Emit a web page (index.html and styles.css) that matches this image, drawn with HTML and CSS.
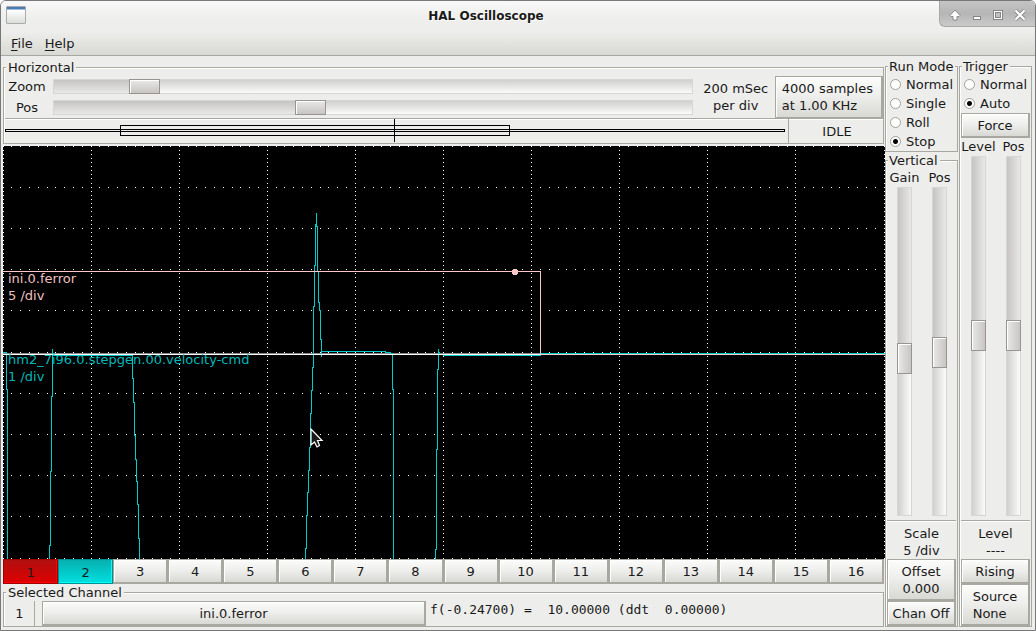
FILE: index.html
```html
<!DOCTYPE html>
<html lang="en">
<head>
<meta charset="utf-8">
<title>HAL Oscilloscope</title>
<link rel="stylesheet" href="styles.css">
</head>
<body>
<div class="window">
  <header class="titlebar">
    <span class="app-icon"></span>
    <h1 class="title">HAL Oscilloscope</h1>
    <div class="win-controls">
      <button class="win-btn" aria-label="Shade"><svg width="12" height="12" viewBox="0 0 12 12"><path d="M6 1L11 6.500L10 7.500H8V11H4V7.500H2L1 6.500Z" fill="#fff" stroke="#8a8a8a"/></svg></button>
      <button class="win-btn" aria-label="Minimize"><svg width="12" height="12" viewBox="0 0 12 12"><rect x="2.500" y="7.500" width="7" height="3" fill="#fff" stroke="#858585"/></svg></button>
      <button class="win-btn" aria-label="Maximize"><svg width="12" height="12" viewBox="0 0 12 12"><rect x="1.500" y="1.500" width="9" height="9" fill="#fff" stroke="#858585"/><rect x="3.500" y="3.500" width="5" height="5" fill="#c0c0c0" stroke="#858585"/></svg></button>
      <button class="win-btn" aria-label="Close"><svg width="12" height="12" viewBox="0 0 12 12"><path d="M1.500 1.500L10.500 10.500M10.500 1.500L1.500 10.500" stroke="#8a8a8a" stroke-width="4"/><path d="M1.500 1.500L10.500 10.500M10.500 1.500L1.500 10.500" stroke="#fff" stroke-width="2.200"/></svg></button>
    </div>
  </header>
  <nav class="menubar">
    <button class="menu"><u>F</u>ile</button>
    <button class="menu"><u>H</u>elp</button>
  </nav>
  <main class="content">
    <div class="scope">
      <fieldset class="frame horizontal">
        <legend>Horizontal</legend>
        <div class="timebase">
          <div class="h-sliders">
            <label for="h-zoom">Zoom</label>
            <input class="slider" id="h-zoom" type="range" min="0" max="1000" value="124" style="--fill:13%">
            <label for="h-pos">Pos</label>
            <input class="slider" id="h-pos" type="range" min="0" max="1000" value="397" style="--fill:40%">
          </div>
          <p class="per-div">200 mSec<br>per div</p>
          <button class="btn samples">4000 samples<br>at 1.00 KHz</button>
        </div>
        <div class="status">
          <div class="record">
            <svg class="record-view" viewBox="0 0 783 24" preserveAspectRatio="none" fill="none" stroke="#000" shape-rendering="crispEdges">
              <rect x="0.500" y="10.500" width="779" height="2"/>
              <rect x="115.500" y="6.500" width="389" height="10"/>
              <path d="M389.500 0V23"/>
            </svg>
          </div>
          <div class="state">IDLE</div>
        </div>
      </fieldset>
      <div class="display">
        <svg class="plot" viewBox="0 0 882 413" preserveAspectRatio="none" fill="none" shape-rendering="crispEdges">
          <path id="graticule" stroke="#fff"/>
          <path d="M0 207.500H537" stroke="#888"/>
          <path d="M0 206.500H3.500V243H4.500V413M46.500 413V399H47.500V325H48.500V250H49.500V203V207H50.500V209.500H129.500V232H130.500V256H131.500V289H132.500V313H133.500V335H134.500V358H135.500V392H136.500V413M302.500 413V402H303.500V369H304.500V346H305.500V324H306.500V301H307.500V267H308.500V244H309.500V221H310.500V160H311.500V119H312.500V78H313.500V67V80H314.500V125H315.500V156H316.500V164H317.500V193H318.500V211V205.500H382V206.500H387V207.500H389.500V243H390.500V413M432.500 413V403H433.500V303H434.500V223H435.500V203V206H436.500V208.500H440V209.500H537V207.500H882" stroke="#00cccc"/>
          <path d="M0 125.500H537.500V208.500H882" stroke="#ffc8c8"/>
          <path d="M0 208.500H537" stroke="#fff"/>
          <circle cx="512" cy="126" r="3" fill="#ffc8c8"/>
        </svg>
        <p class="trace-label trace-1">ini.0.ferror<br>5 /div</p>
        <p class="trace-label trace-2">hm2_7i96.0.stepgen.00.velocity-cmd<br>1 /div</p>
        <svg class="pointer" width="14" height="20" viewBox="0 0 14 20"><path d="M1 1V17L4.500 14L7 19L9.500 17.500L7.500 12.500H12Z" fill="#1a1a1a" stroke="#fff" stroke-width="1.200"/></svg>
      </div>
      <div class="channels">
        <button class="btn on red">1</button>
        <button class="btn on cyan">2</button>
        <button class="btn">3</button>
        <button class="btn">4</button>
        <button class="btn">5</button>
        <button class="btn">6</button>
        <button class="btn">7</button>
        <button class="btn">8</button>
        <button class="btn">9</button>
        <button class="btn">10</button>
        <button class="btn">11</button>
        <button class="btn">12</button>
        <button class="btn">13</button>
        <button class="btn">14</button>
        <button class="btn">15</button>
        <button class="btn">16</button>
      </div>
      <fieldset class="frame selected">
        <legend>Selected Channel</legend>
        <div class="selected-row">
          <span class="chan-number">1</span>
          <button class="btn source-name">ini.0.ferror</button>
          <output class="readout">f(-0.24700) =  10.00000 (ddt  0.00000)</output>
        </div>
      </fieldset>
    </div>

    <div class="side">
      <fieldset class="frame run">
        <legend>Run Mode</legend>
        <label class="radio"><input type="radio" name="run">Normal</label>
        <label class="radio"><input type="radio" name="run">Single</label>
        <label class="radio"><input type="radio" name="run">Roll</label>
        <label class="radio"><input type="radio" name="run" checked>Stop</label>
      </fieldset>
      <fieldset class="frame grow">
        <legend>Vertical</legend>
        <div class="v-sliders">
          <label for="v-gain">Gain</label>
          <label for="v-pos">Pos</label>
          <input class="slider vertical" id="v-gain" type="range" min="0" max="1000" value="525" style="--fill:52%">
          <input class="slider vertical" id="v-pos" type="range" min="0" max="1000" value="505" style="--fill:50%">
        </div>
        <p class="reading">Scale<br>5 /div</p>
        <button class="btn">Offset<br>0.000</button>
        <button class="btn">Chan Off</button>
      </fieldset>
    </div>

    <div class="side">
      <fieldset class="frame grow">
        <legend>Trigger</legend>
        <label class="radio"><input type="radio" name="trigger">Normal</label>
        <label class="radio"><input type="radio" name="trigger" checked>Auto</label>
        <button class="btn">Force</button>
        <div class="v-sliders">
          <label for="t-level">Level</label>
          <label for="t-pos">Pos</label>
          <input class="slider vertical" id="t-level" type="range" min="0" max="1000" value="498" style="--fill:50%">
          <input class="slider vertical" id="t-pos" type="range" min="0" max="1000" value="498" style="--fill:50%">
        </div>
        <p class="reading">Level<br>----</p>
        <button class="btn">Rising</button>
        <button class="btn"><span class="two-line">Source<br>None</span></button>
      </fieldset>
    </div>
  </main>
</div>
<script src="graticule.js"></script>
</body>
</html>
```
FILE: styles.css
```css
* { box-sizing: border-box; }
body {
  margin: 0;
  background: #fff;
  color: #1a1a1a;
  font: 13px/17px "DejaVu Sans", sans-serif;
}
button { font: inherit; color: inherit; }
p { margin: 0; }

.window {
  display: flex;
  flex-direction: column;
  min-height: 100vh;
  overflow: hidden;
  border: 1px solid #777;
  border-radius: 6px 6px 0 0;
  background: #ededeb;
}

.titlebar {
  display: grid;
  grid-template-columns: 32px 1fr 96px;
  align-items: start;
  height: 30px;
  background: linear-gradient(#f8f8f8, #eeeeec 60%);
}
.app-icon {
  width: 20px;
  height: 18px;
  margin: 5px;
  border: 1px solid #a8aba8;
  border-radius: 1px;
  background: linear-gradient(#4a7ab8 0 2px, #fff 3px, #dcdeda);
}
.title {
  margin: 0;
  padding-top: 7px;
  font-size: 12px;
  line-height: 17px;
  text-align: center;
  text-shadow: 1px 1px #fff;
}
.win-controls {
  display: flex;
  align-items: center;
  height: 26px;
  padding: 2px 4px 0;
  border: 1px solid #a8a8a8;
  border-width: 0 0 1px 1px;
  border-radius: 0 0 0 6px;
  background: linear-gradient(#c4c4c4, #b6b6b6 50%, #cacaca);
}
.win-btn {
  flex: 1;
  display: grid;
  place-items: center;
  padding: 0;
  border: 0;
  background: none;
}

.menubar {
  display: flex;
  gap: 12px;
  height: 25px;
  padding: 0 10px;
  border-bottom: 1px solid #a8a8a0;
  background: linear-gradient(#eeeeec, #d8d8d4);
}
.menu { padding: 0; border: 0; background: none; }
.menu u { text-underline-offset: 2px; }

.content {
  flex: 1;
  display: grid;
  grid-template-columns: minmax(0, 1fr) 73px 73px;
  column-gap: 1px;
  padding: 2px 3px 3px 2px;
}
.scope, .side {
  display: flex;
  flex-direction: column;
  min-width: 0;
}
.scope { padding-top: 1px; margin-right: -1px; }

.frame {
  display: flex;
  flex-direction: column;
  min-width: 0;
  margin: 0;
  padding: 0 1px;
  border: 1px solid #a8a8a0;
  box-shadow: inset 1px 1px #fff;
}
.frame legend {
  margin-left: 1px;
  padding: 0 2px;
  background: #ededeb;
  white-space: nowrap;
}
.side .frame legend { padding: 0 2px 0 1px; }
.grow { flex: 1; }

.btn {
  padding: 3px 0 2px;
  border: 1px solid #a8a8a0;
  border-right-width: 2px;
  border-bottom-width: 2px;
  background: linear-gradient(#fcfcfb, #ededeb 50%, #d8d8d4);
  box-shadow: inset 1px 1px #fff;
  text-align: center;
  white-space: nowrap;
}
.two-line { display: inline-block; text-align: left; }

.slider {
  --track: linear-gradient(#d0d0ce, #fbfbfa);
  --filled: linear-gradient(#c6c4c2, #e8e8e6);
  appearance: none;
  width: 100%;
  height: 15px;
  margin: 0;
  border: 1px solid #d6d6d4;
  background: var(--filled) left / var(--fill) 100% no-repeat, var(--track);
}
.slider::-webkit-slider-thumb {
  appearance: none;
  width: 31px;
  height: 15px;
  border: 1px solid #989492;
  background: linear-gradient(#e9e8e7, #c8c5c3);
  box-shadow: inset 1px 1px #fff;
}
.slider.vertical {
  --track: linear-gradient(90deg, #d0d0ce, #fbfbfa);
  --filled: linear-gradient(90deg, #c6c4c2, #e8e8e6);
  writing-mode: vertical-lr;
  width: 15px;
  height: 100%;
  background: var(--filled) top / 100% var(--fill) no-repeat, var(--track);
}
.slider.vertical::-webkit-slider-thumb {
  width: 15px;
  height: 31px;
  background: linear-gradient(90deg, #e9e8e7, #c8c5c3);
}

.horizontal { padding: 0 0 0 1px; margin-right: 1px; }
.timebase {
  display: flex;
  align-items: center;
  height: 42px;
}
.h-sliders {
  flex: 1;
  display: grid;
  grid-template-columns: 44px 1fr;
  column-gap: 4px;
  row-gap: 4px;
  align-items: center;
  text-align: center;
}
.per-div { width: 82px; padding-left: 4px; text-align: center; }
.samples { padding: 3px 8px 3px 6px; text-align: left; }
.status {
  display: flex;
  height: 25px;
  border-top: 1px solid #a8a8a0;
  box-shadow: inset 0 1px #fff;
}
.record { flex: 1; min-width: 0; }
.record-view { display: block; width: 100%; height: 24px; }
.state {
  width: 95px;
  padding: 4px 0 0 2px;
  border-left: 1px solid #a8a8a0;
  text-align: center;
}

.display {
  flex: 1;
  position: relative;
  min-height: 200px;
  margin-top: 2px;
  background: #000;
}
.plot { position: absolute; width: 100%; height: 100%; }
.trace-label { position: absolute; left: 5px; }
.trace-1 { top: 30%; color: #f0c0c0; }
.trace-2 { top: calc(50% - 2px); color: #00b8b8; }
.pointer { position: absolute; left: 307px; top: 282px; }

.channels {
  display: grid;
  grid-template-columns: repeat(16, 1fr);
  margin-right: 1px;
}
.channels .btn { height: 25px; }
.channels .on { border-width: 1px; padding-top: 4px; }
.channels .red { background: linear-gradient(#b01010, #e00000); border-color: #a00000; box-shadow: inset -1px -1px #f00; }
.channels .cyan { background: linear-gradient(#08b0b0, #00e0e0); border-color: #009090; box-shadow: inset -1px -1px #0ff; }

.selected { margin-right: 1px; }
.selected-row {
  display: flex;
  height: 25px;
}
.chan-number {
  width: 30px;
  padding-top: 4px;
  border-right: 1px solid #a8a8a0;
  text-align: center;
}
.source-name { flex: 0 1 384px; margin-left: 7px; }
.readout {
  padding: 0 4px;
  font-family: "DejaVu Sans Mono", monospace;
  white-space: pre;
}

.radio {
  display: flex;
  align-items: center;
  gap: 5px;
  height: 19px;
  padding-left: 3px;
}
.radio input {
  appearance: none;
  flex: none;
  width: 11px;
  height: 11px;
  margin: 0;
  border: 1px solid #a0a098;
  border-radius: 50%;
  background: #fff;
}
.radio input:checked { background: radial-gradient(circle, #000 0 2px, #fff 3px); }

.v-sliders {
  flex: 1;
  display: grid;
  grid-template-columns: 35px 35px;
  grid-template-rows: 17px 1fr;
  row-gap: 1px;
  justify-items: center;
  padding-bottom: 4px;
}
.reading {
  padding: 4px 0 0;
  border-top: 1px solid #a8a8a0;
  box-shadow: inset 0 1px #fff;
  text-align: center;
}
```
FILE: graticule.js
```js
// Dotted 10 x 10 grid, with ten dots per division along each line.
const WIDTH = 881;
const HEIGHT = 412;
let d = "";
for (let line = 0; line <= 10; line++) {
  const gx = Math.floor(WIDTH * line / 10);
  const gy = Math.floor(HEIGHT * line / 10);
  for (let dot = 0; dot <= 100; dot++) {
    d += `M${Math.floor(WIDTH * dot / 100)} ${gy + 0.5}h1`;
    d += `M${gx} ${Math.floor(HEIGHT * dot / 100) + 0.5}h1`;
  }
}
document.getElementById("graticule").setAttribute("d", d);
```
